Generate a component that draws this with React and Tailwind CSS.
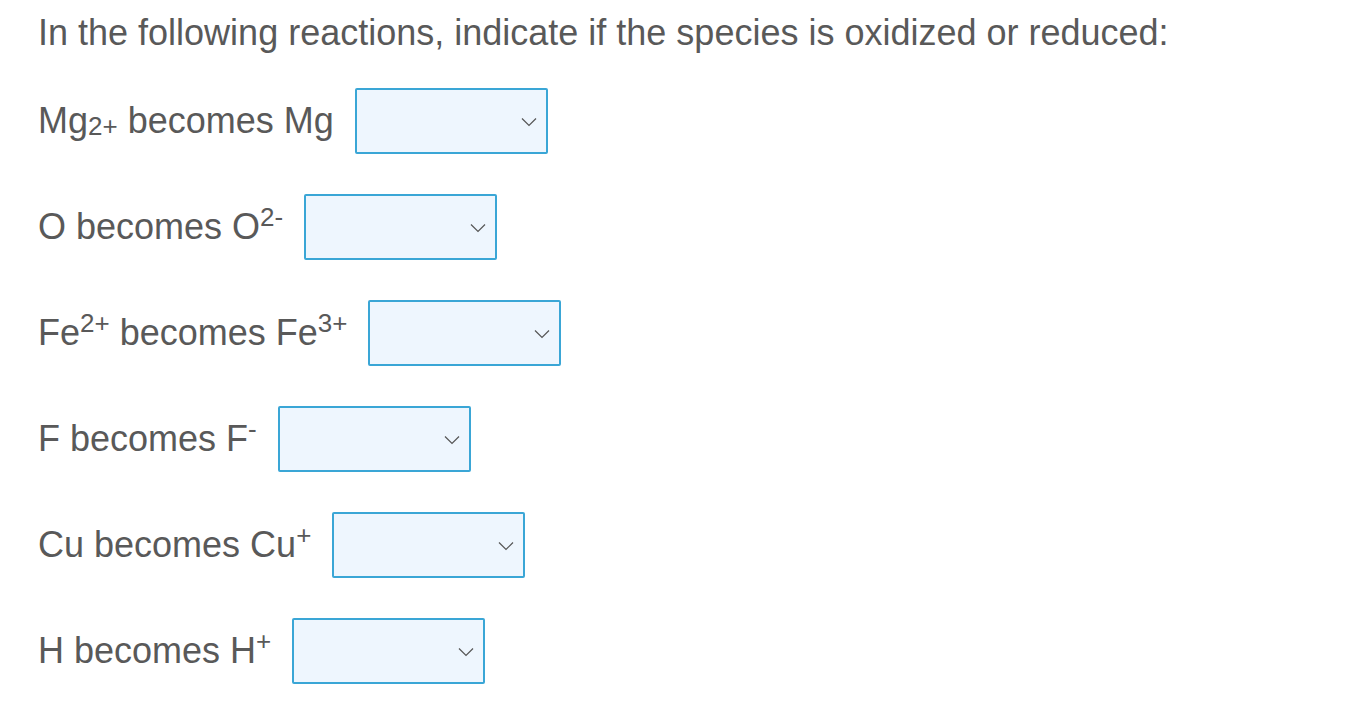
const rows = [
  { label: <>Mg<sub className="text-[26px] relative top-[2px]">2+</sub> becomes Mg</> },
  { label: <>O becomes O<sup className="text-[26px]">2-</sup></> },
  { label: <>Fe<sup className="text-[26px]">2+</sup> becomes Fe<sup className="text-[26px]">3+</sup></> },
  { label: <>F becomes F<sup className="text-[26px]">-</sup></> },
  { label: <>Cu becomes Cu<sup className="text-[26px]">+</sup></> },
  { label: <>H becomes H<sup className="text-[26px]">+</sup></> },
]

function Select() {
  return (
    <div className="w-[193px] h-[66px] border-2 border-[#3aa6d6] bg-[#eef6fe] rounded-[2px] flex items-center justify-end pr-[8px]">
      <svg width="18" height="11" viewBox="0 0 18 11" fill="none">
        <path d="M2 2.5l7 7 7-7" stroke="#555" strokeWidth="1.2" />
      </svg>
    </div>
  )
}

export default function App() {
  return (
    <div className="min-h-screen bg-white pl-[38px] pt-[12px] text-[#595959] font-['Liberation_Sans',Arial,sans-serif]">
      <p className="text-[36px] leading-[42px]">
        In the following reactions, indicate if the species is oxidized or reduced:
      </p>
      <div className="flex flex-col gap-[40px] mt-[34px]">
        {rows.map((r, i) => (
          <div key={i} className="flex items-center gap-[21px]">
            <span className="text-[36px] leading-[42px]">{r.label}</span>
            <Select />
          </div>
        ))}
      </div>
    </div>
  )
}
